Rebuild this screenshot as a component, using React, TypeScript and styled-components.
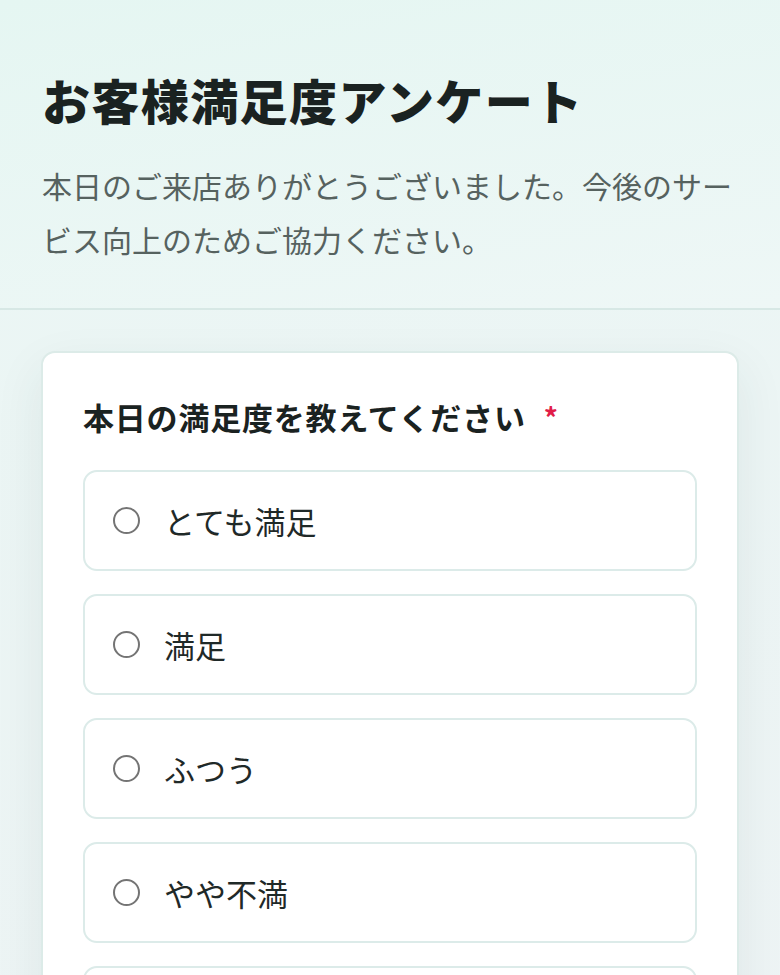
import styled, { createGlobalStyle } from "styled-components";

const GlobalStyle = createGlobalStyle`
  * { box-sizing: border-box; }
  html, body {
    margin: 0;
    padding: 0;
  }
  body {
    font-family: "Noto Sans CJK JP", "Noto Sans", sans-serif;
    background: linear-gradient(160deg, #eaf6f4 0%, #eef4f5 100%);
    min-height: 975px;
    color: #1c2524;
  }
`;

const Header = styled.header`
  padding: 68px 40px 42px 42px;
  background: linear-gradient(170deg, #e5f6f2 0%, #eef7f6 100%);
  border-bottom: 2px solid #d7e8e5;
`;

const Title = styled.h1`
  margin: 0 0 28px;
  font-size: 48px;
  line-height: 62px;
  font-weight: 800;
  letter-spacing: 1.4px;
  color: #1a2221;
`;

const Lead = styled.p`
  margin: 0;
  font-size: 30px;
  line-height: 54px;
  color: #56625f;
`;

const Main = styled.main`
  padding: 41px 41px 0 41px;
`;

const Card = styled.section`
  background: #fff;
  border: 2px solid #dcebe8;
  border-radius: 14px;
  padding: 40px;
  box-shadow: 0 18px 50px rgba(40, 70, 70, 0.08);
`;

const Question = styled.h2`
  margin: 0 0 29px;
  font-size: 31px;
  line-height: 48px;
  font-weight: 700;
  letter-spacing: 0.8px;
  color: #1a2221;
  display: flex;
  align-items: center;
  gap: 18px;
`;

const Required = styled.span`
  color: #e11d48;
  font-size: 28px;
`;

const Options = styled.div`
  display: flex;
  flex-direction: column;
  gap: 23px;
`;

const Option = styled.label`
  display: flex;
  align-items: center;
  gap: 24px;
  height: 101px;
  padding: 0 28px;
  border: 2px solid #dcebe9;
  border-radius: 14px;
  font-size: 31px;
  color: #1f2928;
  cursor: pointer;
`;

const Radio = styled.span`
  width: 27px;
  height: 27px;
  border-radius: 50%;
  border: 2px solid #747474;
  flex: none;
`;

const options = ["とても満足", "満足", "ふつう", "やや不満", "不満"];

export default function App() {
  return (
    <>
      <GlobalStyle />
      <Header>
        <Title>お客様満足度アンケート</Title>
        <Lead>
          本日のご来店ありがとうございました。今後のサービス向上のためご協力ください。
        </Lead>
      </Header>
      <Main>
        <Card>
          <Question>
            本日の満足度を教えてください
            <Required>*</Required>
          </Question>
          <Options>
            {options.map((o) => (
              <Option key={o}>
                <Radio />
                {o}
              </Option>
            ))}
          </Options>
        </Card>
      </Main>
    </>
  );
}
